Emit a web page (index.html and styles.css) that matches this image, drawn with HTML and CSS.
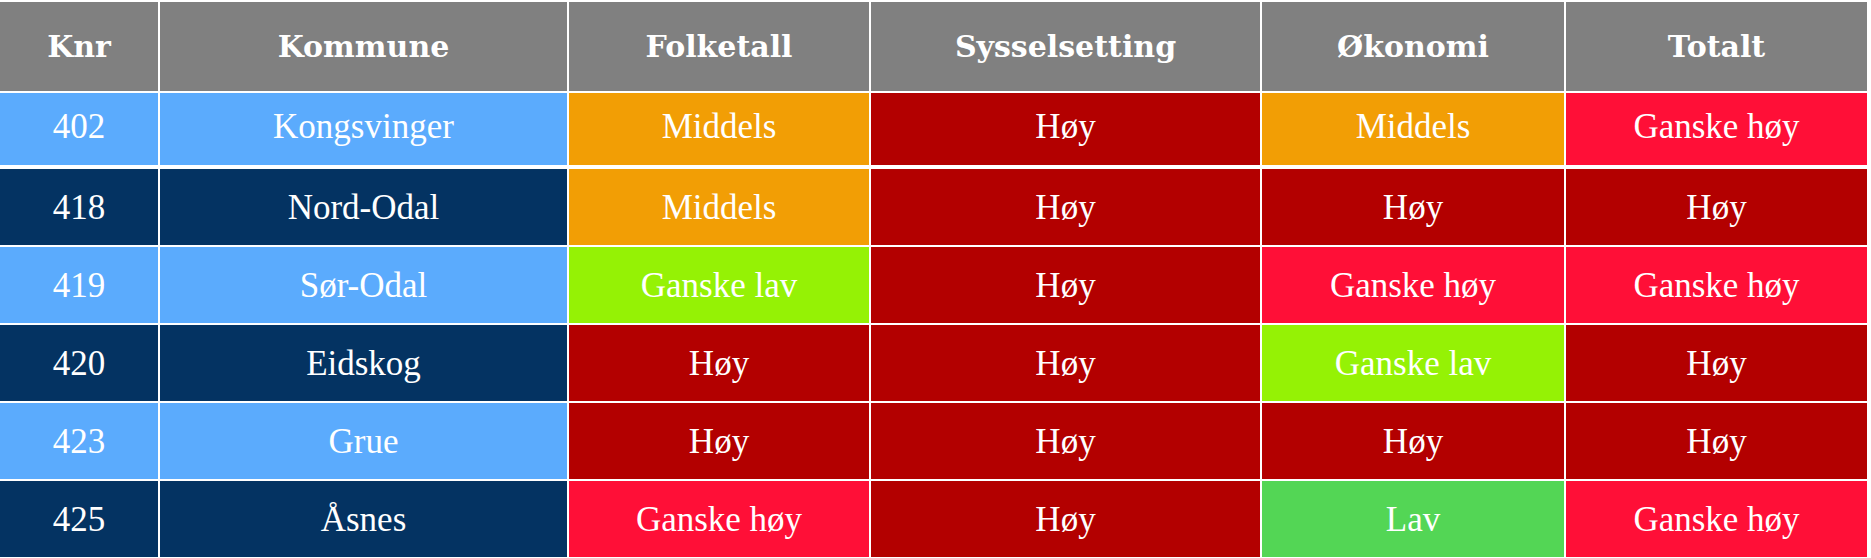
FILE: index.html
```html
<!DOCTYPE html>
<html lang="no">
<head>
<meta charset="utf-8">
<title>Kommuner</title>
<link rel="stylesheet" href="styles.css">
</head>
<body>
<div class="table">
  <div class="row head">
    <div class="cell">Knr</div>
    <div class="cell">Kommune</div>
    <div class="cell">Folketall</div>
    <div class="cell">Sysselsetting</div>
    <div class="cell">Økonomi</div>
    <div class="cell">Totalt</div>
  </div>
  <div class="row first">
    <div class="cell light">402</div>
    <div class="cell light">Kongsvinger</div>
    <div class="cell orange">Middels</div>
    <div class="cell red">Høy</div>
    <div class="cell orange">Middels</div>
    <div class="cell crimson">Ganske høy</div>
  </div>
  <div class="row">
    <div class="cell navy">418</div>
    <div class="cell navy">Nord-Odal</div>
    <div class="cell orange">Middels</div>
    <div class="cell red">Høy</div>
    <div class="cell red">Høy</div>
    <div class="cell red">Høy</div>
  </div>
  <div class="row">
    <div class="cell light">419</div>
    <div class="cell light">Sør-Odal</div>
    <div class="cell lime">Ganske lav</div>
    <div class="cell red">Høy</div>
    <div class="cell crimson">Ganske høy</div>
    <div class="cell crimson">Ganske høy</div>
  </div>
  <div class="row">
    <div class="cell navy">420</div>
    <div class="cell navy">Eidskog</div>
    <div class="cell red">Høy</div>
    <div class="cell red">Høy</div>
    <div class="cell lime">Ganske lav</div>
    <div class="cell red">Høy</div>
  </div>
  <div class="row">
    <div class="cell light">423</div>
    <div class="cell light">Grue</div>
    <div class="cell red">Høy</div>
    <div class="cell red">Høy</div>
    <div class="cell red">Høy</div>
    <div class="cell red">Høy</div>
  </div>
  <div class="row">
    <div class="cell navy">425</div>
    <div class="cell navy">Åsnes</div>
    <div class="cell crimson">Ganske høy</div>
    <div class="cell red">Høy</div>
    <div class="cell green">Lav</div>
    <div class="cell crimson">Ganske høy</div>
  </div>
</div>
</body>
</html>
```

FILE: styles.css
```css
html, body {
  margin: 0;
  padding: 0;
  background: #ffffff;
}

body {
  font-family: "Liberation Serif", "Times New Roman", serif;
  color: #ffffff;
}

.table {
  display: flex;
  flex-direction: column;
  gap: 2px;
  padding-top: 2px;
  width: 1867px;
}

.row {
  display: grid;
  grid-template-columns: 158px 407px 300px 389px 302px 301px;
  column-gap: 2px;
  height: 76px;
}

.row.head {
  height: 89px;
}

.row.first {
  height: 72px;
  margin-bottom: 2px;
}

.cell {
  display: flex;
  align-items: center;
  justify-content: center;
  font-size: 35px;
  line-height: 1;
  white-space: nowrap;
}

.first .cell {
  padding-bottom: 6px;
}

.head .cell {
  background: #808080;
  font-family: "DejaVu Serif", serif;
  font-weight: bold;
  font-size: 30px;
}

.light { background: #5babfd; }
.navy { background: #043362; }
.orange { background: #f29e05; }
.red { background: #b30000; }
.crimson { background: #ff0f37; }
.lime { background: #95f205; }
.green { background: #53d655; }
```
